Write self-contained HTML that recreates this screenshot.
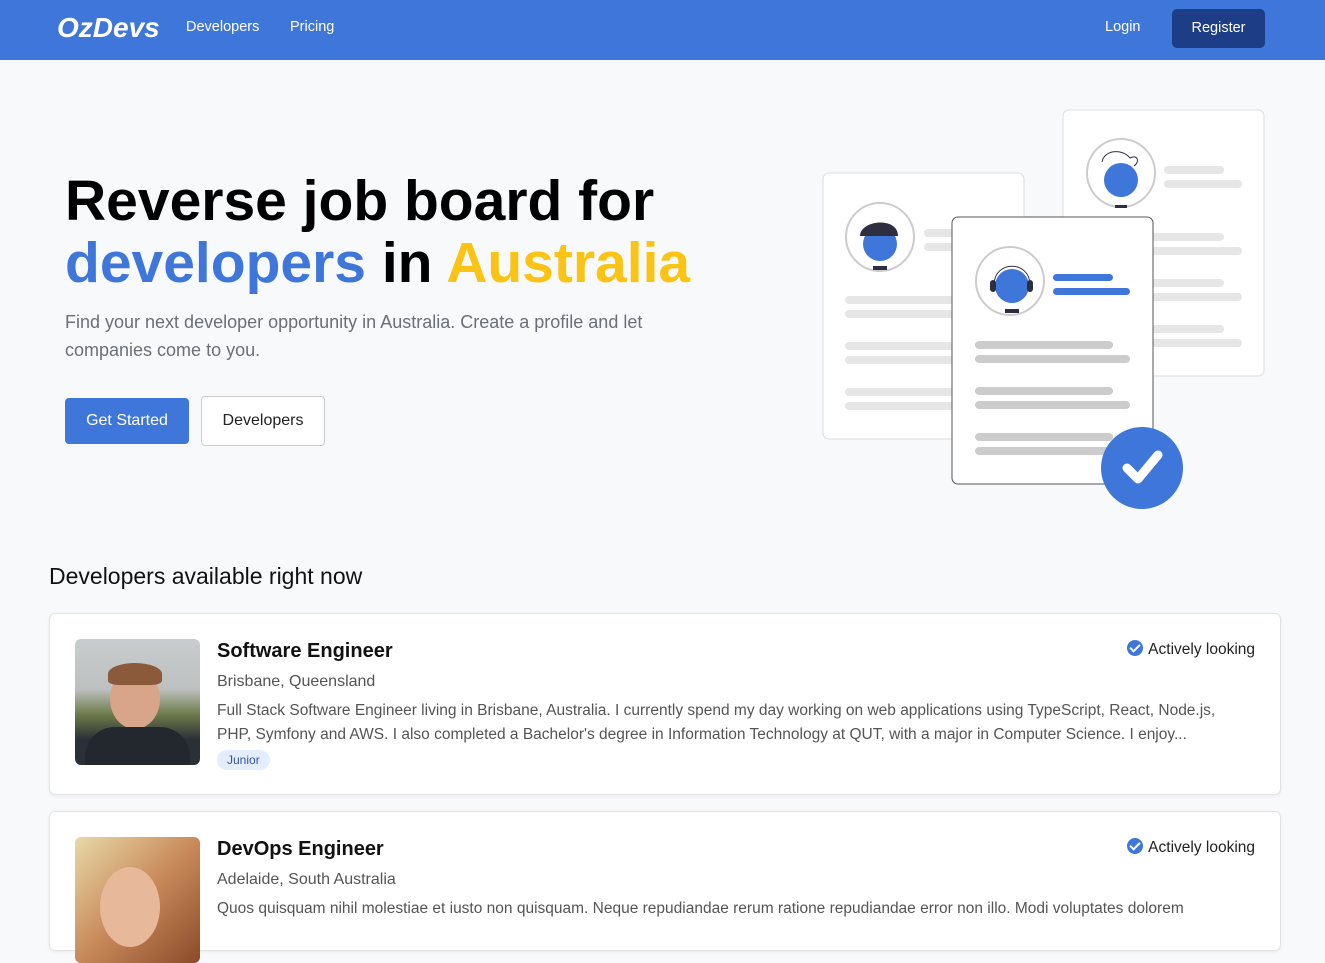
<!DOCTYPE html>
<html><head><meta charset="utf-8"><style>
*{box-sizing:border-box;margin:0;padding:0}
body{width:1325px;height:919px;overflow:hidden;background:#f8f9fb;font-family:"Liberation Sans",sans-serif;color:#111;position:relative}
.nav{position:absolute;left:0;top:0;width:1325px;height:60px;background:#3f76d9;color:#fff}
.nav .logo{position:absolute;left:57px;top:12px;font-size:28px;font-weight:bold;font-style:italic;letter-spacing:0px}
.nav .l{position:absolute;top:19px;font-size:14.5px}
.reg{position:absolute;left:1172px;top:9px;width:93px;height:39px;background:#1d3e86;border-radius:5px;color:#fff;font-size:14.5px;text-align:center;line-height:39px}
h1{position:absolute;left:65px;top:170px;font-size:57px;line-height:62px;font-weight:bold;letter-spacing:0;color:#000}
.blue{color:#3f76d9}.yel{color:#fbc313}
.sub{position:absolute;left:65px;top:308px;width:650px;font-size:18px;line-height:28px;color:#6b6f76}
.b1{position:absolute;left:65px;top:398px;width:124px;height:46px;background:#3f76d9;color:#fff;border-radius:4px;font-size:16px;text-align:center;line-height:46px}
.b2{position:absolute;left:201px;top:396px;width:124px;height:50px;background:#fff;border:1px solid #ccc;border-radius:4px;font-size:16px;text-align:center;line-height:48px;color:#222}
h2{position:absolute;left:49px;top:563px;font-size:23px;font-weight:normal;color:#111}
.card{position:absolute;left:49px;width:1232px;background:#fff;border:1px solid #e2e4e8;border-radius:6px;box-shadow:0 1px 3px rgba(0,0,0,.06)}
.card .ph{position:absolute;left:25px;top:25px;width:125px;height:126px;border-radius:6px;overflow:hidden}
.card .t{position:absolute;left:167px;top:26px;font-size:20px;font-weight:bold;color:#111}
.card .loc{position:absolute;left:167px;top:59px;font-size:16px;color:#555}
.card .d{position:absolute;left:167px;top:85px;width:1030px;font-size:15.5px;line-height:24px;color:#555}
.card .al{position:absolute;right:25px;top:26px;font-size:15.5px;color:#222}
.card .al i{display:inline-block;width:16px;height:16px;border-radius:50%;background:#3f76d9;vertical-align:-2px;margin-right:5px;position:relative}
.card .al i:after{content:"";position:absolute;left:5px;top:2px;width:4px;height:8px;border:solid #fff;border-width:0 2px 2px 0;transform:rotate(45deg)}
.tag{position:absolute;left:167px;top:136px;background:#e3edfd;color:#3653a0;font-size:12px;padding:3px 10px;border-radius:10px}
</style></head><body>
<div class="nav"><div class="logo">OzDevs</div><div class="l" style="left:186px">Developers</div><div class="l" style="left:290px">Pricing</div><div class="l" style="left:1105px">Login</div><div class="reg">Register</div></div>
<h1>Reverse job board for<br><span class="blue">developers</span> in <span class="yel">Australia</span></h1>
<div class="sub">Find your next developer opportunity in Australia. Create a profile and let companies come to you.</div>
<div class="b1">Get Started</div><div class="b2">Developers</div>
<svg style="position:absolute;left:0;top:0" width="1325" height="560">
<g fill="#e6e6e6">
<rect x="1063" y="110" width="201" height="266" rx="6" fill="#fff" stroke="#ddd"/>
<rect x="1164" y="166" width="60" height="8" rx="4"/><rect x="1164" y="180" width="78" height="8" rx="4"/>
<rect x="1150" y="233" width="74" height="8" rx="4"/><rect x="1150" y="247" width="92" height="8" rx="4"/>
<rect x="1150" y="279" width="74" height="8" rx="4"/><rect x="1150" y="293" width="92" height="8" rx="4"/>
<rect x="1150" y="325" width="74" height="8" rx="4"/><rect x="1150" y="339" width="92" height="8" rx="4"/>
<circle cx="1121" cy="173" r="34" fill="#fff" stroke="#ccc" stroke-width="2"/><circle cx="1121" cy="180" r="17" fill="#3f76d9"/>
<path d="M1115 205h12v3h-12z" fill="#2f2e41"/><path d="M1102 162c2-12 20-14 28-4c8-4 10 4 4 8" stroke="#2f2e41" fill="none"/>
<rect x="823" y="173" width="201" height="266" rx="6" fill="#fff" stroke="#ddd"/>
<rect x="924" y="229" width="60" height="8" rx="4"/><rect x="924" y="243" width="60" height="8" rx="4"/>
<rect x="845" y="296" width="120" height="8" rx="4"/><rect x="845" y="310" width="120" height="8" rx="4"/>
<rect x="845" y="342" width="120" height="8" rx="4"/><rect x="845" y="356" width="120" height="8" rx="4"/>
<rect x="845" y="388" width="120" height="8" rx="4"/><rect x="845" y="402" width="120" height="8" rx="4"/>
<circle cx="880" cy="237" r="34" fill="#fff" stroke="#ccc" stroke-width="2"/><circle cx="880" cy="244" r="17" fill="#3f76d9"/>
<path d="M860 236c0-16 38-20 38 0z" fill="#2f2e41"/><path d="M873 266h14v4h-14z" fill="#2f2e41"/>
<rect x="952" y="217" width="201" height="267" rx="6" fill="#fff" stroke="#555"/>
<circle cx="1010" cy="281" r="34" fill="#fff" stroke="#ccc" stroke-width="2"/><circle cx="1012" cy="286" r="17" fill="#3f76d9"/>
<path d="M994 285c0-25 36-25 36 0" stroke="#2f2e41" fill="none"/><rect x="990" y="280" width="6" height="12" rx="3" fill="#2f2e41"/><rect x="1027" y="280" width="6" height="12" rx="3" fill="#2f2e41"/>
<path d="M1005 309h14v4h-14z" fill="#2f2e41"/>
<rect x="1053" y="274" width="60" height="7" rx="3.5" fill="#3f76d9"/><rect x="1053" y="288" width="77" height="7" rx="3.5" fill="#3f76d9"/>
<g fill="#ccc"><rect x="975" y="341" width="138" height="8" rx="4"/><rect x="975" y="355" width="155" height="8" rx="4"/>
<rect x="975" y="387" width="138" height="8" rx="4"/><rect x="975" y="401" width="155" height="8" rx="4"/>
<rect x="975" y="433" width="138" height="8" rx="4"/><rect x="975" y="447" width="155" height="8" rx="4"/></g>
<circle cx="1142" cy="468" r="41" fill="#3f76d9"/><path d="M1127 468l11 11l20-24" stroke="#fff" stroke-width="9" fill="none" stroke-linecap="round" stroke-linejoin="round"/>
</g></svg>
<h2>Developers available right now</h2>
<div class="card" style="top:613px;height:182px">
<div class="ph" style="background:linear-gradient(180deg,#c9ccce 0,#bdc0bf 40%,#6c7a4a 60%,#2b2f36 80%)"><div style="position:absolute;left:35px;top:30px;width:50px;height:60px;border-radius:50%;background:#d9a58a"></div><div style="position:absolute;left:33px;top:24px;width:54px;height:22px;border-radius:50% 50% 20% 20%;background:#8a5a3a"></div><div style="position:absolute;left:10px;top:88px;width:105px;height:45px;border-radius:30px 30px 0 0;background:#23272e"></div></div>
<div class="t">Software Engineer</div><div class="loc">Brisbane, Queensland</div>
<div class="d">Full Stack Software Engineer living in Brisbane, Australia. I currently spend my day working on web applications using TypeScript, React, Node.js, PHP, Symfony and AWS. I also completed a Bachelor's degree in Information Technology at QUT, with a major in Computer Science. I enjoy...</div>
<div class="tag">Junior</div><div class="al"><i></i>Actively looking</div></div>
<div class="card" style="top:811px;height:140px">
<div class="ph" style="background:linear-gradient(135deg,#e8d9a8,#c98a5a 50%,#8a4a2a)"><div style="position:absolute;left:25px;top:30px;width:60px;height:80px;border-radius:50%;background:#e8b89a"></div></div>
<div class="t">DevOps Engineer</div><div class="loc">Adelaide, South Australia</div>
<div class="d">Quos quisquam nihil molestiae et iusto non quisquam. Neque repudiandae rerum ratione repudiandae error non illo. Modi voluptates dolorem</div>
<div class="al"><i></i>Actively looking</div></div>
</body></html>
